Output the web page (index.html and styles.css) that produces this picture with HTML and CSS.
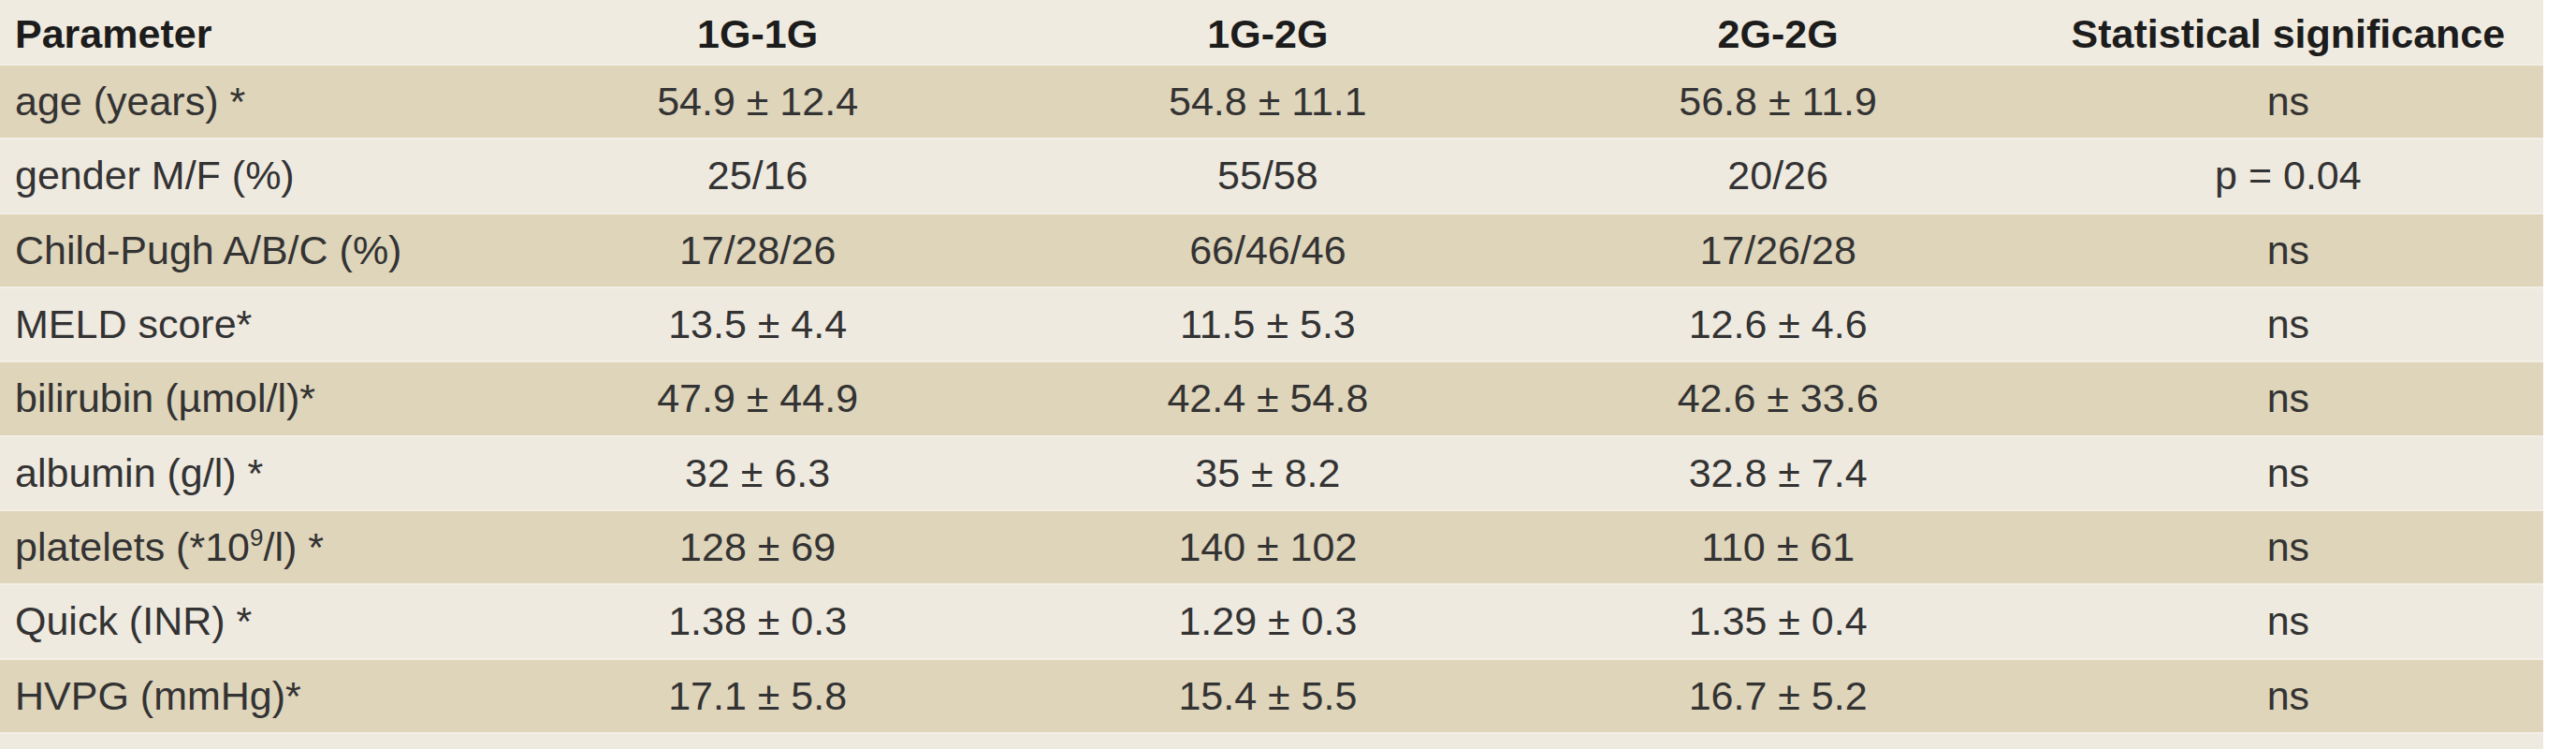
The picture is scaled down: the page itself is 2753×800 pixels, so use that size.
FILE: index.html
```html
<!DOCTYPE html>
<html lang="en">
<head>
<meta charset="utf-8">
<title>Patient characteristics</title>
<link rel="stylesheet" href="styles.css">
</head>
<body>
<div class="table">
  <div class="row head">
    <div class="cell first">Parameter</div>
    <div class="cell">1G-1G</div>
    <div class="cell">1G-2G</div>
    <div class="cell">2G-2G</div>
    <div class="cell">Statistical significance</div>
  </div>
  <div class="row dark">
    <div class="cell first">age (years) *</div>
    <div class="cell">54.9 ± 12.4</div>
    <div class="cell">54.8 ± 11.1</div>
    <div class="cell">56.8 ± 11.9</div>
    <div class="cell">ns</div>
  </div>
  <div class="row light">
    <div class="cell first">gender M/F (%)</div>
    <div class="cell">25/16</div>
    <div class="cell">55/58</div>
    <div class="cell">20/26</div>
    <div class="cell">p = 0.04</div>
  </div>
  <div class="row dark">
    <div class="cell first">Child-Pugh A/B/C (%)</div>
    <div class="cell">17/28/26</div>
    <div class="cell">66/46/46</div>
    <div class="cell">17/26/28</div>
    <div class="cell">ns</div>
  </div>
  <div class="row light">
    <div class="cell first">MELD score*</div>
    <div class="cell">13.5 ± 4.4</div>
    <div class="cell">11.5 ± 5.3</div>
    <div class="cell">12.6 ± 4.6</div>
    <div class="cell">ns</div>
  </div>
  <div class="row dark">
    <div class="cell first">bilirubin (µmol/l)*</div>
    <div class="cell">47.9 ± 44.9</div>
    <div class="cell">42.4 ± 54.8</div>
    <div class="cell">42.6 ± 33.6</div>
    <div class="cell">ns</div>
  </div>
  <div class="row light">
    <div class="cell first">albumin (g/l) *</div>
    <div class="cell">32 ± 6.3</div>
    <div class="cell">35 ± 8.2</div>
    <div class="cell">32.8 ± 7.4</div>
    <div class="cell">ns</div>
  </div>
  <div class="row dark">
    <div class="cell first">platelets (*10<sup class="sup">9</sup>/l) *</div>
    <div class="cell">128 ± 69</div>
    <div class="cell">140 ± 102</div>
    <div class="cell">110 ± 61</div>
    <div class="cell">ns</div>
  </div>
  <div class="row light">
    <div class="cell first">Quick (INR) *</div>
    <div class="cell">1.38 ± 0.3</div>
    <div class="cell">1.29 ± 0.3</div>
    <div class="cell">1.35 ± 0.4</div>
    <div class="cell">ns</div>
  </div>
  <div class="row dark">
    <div class="cell first">HVPG (mmHg)*</div>
    <div class="cell">17.1 ± 5.8</div>
    <div class="cell">15.4 ± 5.5</div>
    <div class="cell">16.7 ± 5.2</div>
    <div class="cell">ns</div>
  </div>
  <div class="row light filler"></div>
</div>
</body>
</html>
```
FILE: styles.css
```css
html, body {
  margin: 0;
  padding: 0;
  background: #ffffff;
}

body {
  font-family: "Liberation Sans", Arial, sans-serif;
  font-size: 43px;
  color: #333333;
  overflow: hidden;
}

.table {
  width: 2718px;
  display: flex;
  flex-direction: column;
}

.row {
  display: grid;
  grid-template-columns: 537px repeat(4, 1fr);
  align-items: center;
  height: 79.33px;
  box-sizing: border-box;
  border-top: 2px solid #f3efe6;
}

.head {
  height: 68px;
  border-top: none;
  background: #f0ebe0;
  font-weight: bold;
  color: #1c1c1c;
  padding-top: 4px;
}

.dark {
  background: #dfd5bb;
}

.light {
  background: #efeae0;
}

.filler {
  height: 18px;
}

.cell {
  text-align: center;
  white-space: nowrap;
  line-height: 1;
}

.cell.first {
  text-align: left;
  padding-left: 16px;
}

.sup {
  font-size: 26px;
  line-height: 0;
  vertical-align: 16px;
}
```
